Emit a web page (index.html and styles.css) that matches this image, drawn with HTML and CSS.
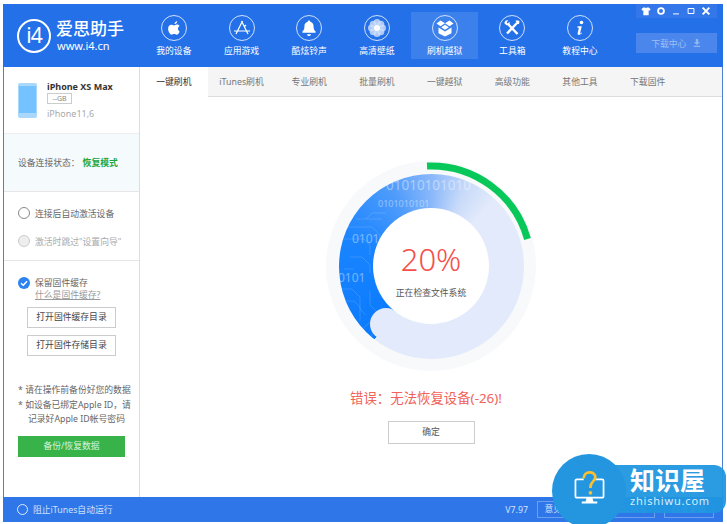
FILE: index.html
```html
<!DOCTYPE html>
<html lang="zh-CN">
<head>
  <meta charset="UTF-8">
  <title>爱思助手</title>
  <link rel="stylesheet" href="styles.css">
</head>
<body>
  <div class="window">
    <header class="topbar">
      <div class="logo">
        <div class="logo-mark">i4</div>
        <div class="logo-text">
          <div class="logo-name">爱思助手</div>
          <div class="logo-url">www.i4.cn</div>
        </div>
      </div>
      <nav class="nav">
        <div class="nav-item">
          <svg class="nav-icon" viewBox="0 0 26 26"><circle cx="13" cy="13" r="12.5" class="ring"/><path class="fill" d="M16.2 6.2c.1 1.100-.9 2.700-2.700 2.700-.1-1.300 1.200-2.600 2.700-2.700zM18.600 16.400c-.6 1.500-1.700 3.300-2.900 3.300-1 0-1.300-.6-2.500-.6s-1.500.6-2.500.6c-1.500 0-3.600-3.200-3.600-6 0-2.600 1.700-4 3.200-4 1.100 0 1.900.7 2.700.7s1.500-.8 2.900-.8c.9 0 2 .5 2.700 1.400-2.300 1.300-1.900 4.500 0 5.400z"/></svg>
          <span>我的设备</span>
        </div>
        <div class="nav-item">
          <svg class="nav-icon" viewBox="0 0 26 26"><circle cx="13" cy="13" r="12.500" class="ring"/><path class="line" d="M13.500 6 7 19M12.500 6 19 19M5 16h16M15 12l2-2"/></svg>
          <span>应用游戏</span>
        </div>
        <div class="nav-item">
          <svg class="nav-icon" viewBox="0 0 26 26"><circle cx="13" cy="13" r="12.500" class="ring"/><path class="fill" d="M13 5.500c.8 0 1.300.6 1.300 1.300 2.300.6 3.300 2.500 3.300 4.700 0 2.500.6 3.700 2 5v1.200H6.400v-1.200c1.400-1.300 2-2.500 2-5 0-2.200 1-4.100 3.300-4.700 0-.7.500-1.300 1.300-1.300zM11 19.200h4c0 1.100-.9 1.800-2 1.800s-2-.7-2-1.800z"/></svg>
          <span>酷炫铃声</span>
        </div>
        <div class="nav-item">
          <svg class="nav-icon" viewBox="0 0 26 26"><circle cx="13" cy="13" r="12.500" class="ring"/><g class="petals"><circle cx="13" cy="7.500" r="3.500"/><circle cx="13" cy="18.500" r="3.500"/><circle cx="7.500" cy="13" r="3.500"/><circle cx="18.500" cy="13" r="3.500"/><circle cx="9.200" cy="9.200" r="3.500"/><circle cx="16.800" cy="9.200" r="3.500"/><circle cx="9.200" cy="16.800" r="3.500"/><circle cx="16.800" cy="16.800" r="3.500"/></g><circle cx="13" cy="13" r="3" class="fill"/></svg>
          <span>高清壁纸</span>
        </div>
        <div class="nav-item nav-item-active">
          <svg class="nav-icon" viewBox="0 0 26 26"><circle cx="13" cy="13" r="12.500" class="ring"/><path class="fill" d="M8.500 5.500 13 8.300 8.500 11.200 4.500 8.500zM17.500 5.500 21.500 8.500 17.500 11.200 13 8.300zM13 9.800 16.800 12.300 13 14.800 9.200 12.300zM6.500 12.500l2 1.300L13 16.500l4.500-2.700 2-1.300v5.700L13 21.500l-6.500-3.300z"/></svg>
          <span>刷机越狱</span>
        </div>
        <div class="nav-item">
          <svg class="nav-icon" viewBox="0 0 26 26"><circle cx="13" cy="13" r="12.500" class="ring"/><path class="line-bold" d="M9 9l9.500 10"/><path class="line-bold" d="M18 8l-10 10.500"/><path class="fill" d="M5.500 8.500c-.3-2.200 1.800-3.900 3.800-3l-1.700 1.700 1.200 1.300 1.700-1.700c.8 2-.9 3.900-3 3.500zM16.500 5.500h3l1 1-.5 2.500h-2z"/></svg>
          <span>工具箱</span>
        </div>
        <div class="nav-item">
          <svg class="nav-icon" viewBox="0 0 26 26"><circle cx="13" cy="13" r="12.500" class="ring"/><circle cx="14.500" cy="7.500" r="1.800" class="fill"/><path class="fill" d="M10.500 11.300h4.300l-1.700 6.700c-.1.500.3.600.7.300l1-.8.300.5c-1.100 1.200-2 1.800-3.100 1.800-1.200 0-1.600-.7-1.300-1.900l1.100-4.700c.1-.5-.3-.6-1.300-.5z"/></svg>
          <span>教程中心</span>
        </div>
      </nav>
      <div class="top-right">
        <div class="win-controls">
          <svg viewBox="0 0 12 12"><path class="fill" d="M3.500 1.500 6 2.500l2.500-1 3 2-1.200 2.200-1.100-.5V11H2.800V5.200l-1.100.5L.5 3.500z"/></svg>
          <svg viewBox="0 0 12 12"><circle cx="6" cy="6" r="3.500" fill="none" stroke="#fff" stroke-width="2.200"/></svg>
          <svg viewBox="0 0 12 12"><path class="line" d="M2.500 9.500h7"/></svg>
          <svg viewBox="0 0 12 12"><path class="line" d="M2.500 3h7v6h-7z"/></svg>
          <svg viewBox="0 0 12 12"><path class="line-bold" d="M2 2l8 8M10 2l-8 8"/></svg>
        </div>
        <div class="download-btn">下载中心
          <svg viewBox="0 0 10 10"><path d="M3.500 0h3v4h2.500L5 7.500 1 4h2.500zM1 8.500h8V10H1z" fill="#8fb6f3"/></svg>
        </div>
      </div>
    </header>

    <div class="body-row">
      <aside class="sidebar">
        <section class="device">
          <div class="phone"><div class="phone-screen"></div></div>
          <div>
            <div class="device-name">iPhone XS Max</div>
            <div class="device-size">--GB</div>
            <div class="device-model">iPhone11,6</div>
          </div>
        </section>
        <section class="status">设备连接状态：<b>恢复模式</b></section>
        <section class="options">
          <div class="option"><i class="radio"></i>连接后自动激活设备</div>
          <div class="option option-off"><i class="radio radio-off"></i>激活时跳过"设置向导"</div>
        </section>
        <section class="cache">
          <div class="cache-check">
            <svg class="check" viewBox="0 0 12 12"><circle cx="6" cy="6" r="6" fill="#2b82f0"/><path d="M3 6.200 5.300 8.300 9 4.200" fill="none" stroke="#fff" stroke-width="1.500"/></svg>
            <div>
              <div>保留固件缓存</div>
              <div class="cache-link">什么是固件缓存?</div>
            </div>
          </div>
          <div class="side-btn">打开固件缓存目录</div>
          <div class="side-btn">打开固件存储目录</div>
        </section>
        <section class="notes">
          <p>* 请在操作前备份好您的数据</p>
          <p>* 如设备已绑定Apple ID，请<br><span class="indent">记录好Apple ID帐号密码</span></p>
          <div class="backup-btn">备份/恢复数据</div>
        </section>
      </aside>

      <main class="main">
        <div class="tabs">
          <div class="tab tab-active">一键刷机</div>
          <div class="tab">iTunes刷机</div>
          <div class="tab">专业刷机</div>
          <div class="tab">批量刷机</div>
          <div class="tab">一键越狱</div>
          <div class="tab">高级功能</div>
          <div class="tab">其他工具</div>
          <div class="tab">下载固件</div>
        </div>
        <div class="flash">
          <div class="dial">
            <div class="disc"></div>
            <svg class="dial-art" viewBox="0 0 210 210">
              <g class="circuit">
                <path d="M22 66h24l8 8v12M16 78h22l6 6v10M30 58h26M24 96h12l8 8v8M12 128h14l8 8v12l6 6M20 140h8l6 6v14M44 130v14l10 10M34 170l16-14 6-6M44 176l14-14M18 108h10M60 52h-14l-6 6"/>
              </g>
              <g class="binary">
                <text x="60" y="29" font-size="13.500">01010101010</text>
                <text x="52" y="46" font-size="9">0101010101</text>
                <text x="26" y="82" font-size="12">0101</text>
                <text x="12" y="121" font-size="12">0101</text>
                <text x="50" y="170" font-size="9">01</text>
              </g>
              <circle cx="60" cy="163" r="16" fill="#e2eafb"/>
              <path d="M101 5A100 100 0 0 1 201.500 78" fill="none" stroke="#08c85a" stroke-width="7"/>
            </svg>
            <div class="hole">
              <div class="percent">20%</div>
              <div class="hole-label">正在检查文件系统</div>
            </div>
          </div>
          <div class="error">错误：无法恢复设备(-26)!</div>
          <div class="ok-btn">确定</div>
        </div>
      </main>
    </div>

    <footer class="footer">
      <div class="footer-left"><i class="footer-radio"></i>阻止iTunes自动运行</div>
      <div class="footer-right">
        <span class="version">V7.97</span>
        <span class="foot-btn">意见反馈</span>
        <span class="foot-btn foot-btn-wide">微信公众号</span>
        <span class="foot-btn">检查更新</span>
      </div>
    </footer>
  </div>

  <!-- site watermark sits over the window corner -->
  <div class="watermark">
    <div class="wm-bar">
      <div class="wm-name">知识屋</div>
      <div class="wm-url">zhishiwu.com</div>
    </div>
    <div class="wm-circle">
      <svg viewBox="0 0 32 36" class="wm-icon">
        <path d="M10 9H3a1.500 1.500 0 0 0-1.500 1.500v16A1.500 1.500 0 0 0 3 28h26a1.500 1.500 0 0 0 1.500-1.500v-16A1.500 1.500 0 0 0 29 9h-7" fill="none" stroke="#fff" stroke-width="1.800"/>
        <path d="M13 28h6l1 4h4v2H8v-2h4z" fill="#fff"/>
        <path d="M10 8c0-8 12-8 12-1 0 4-5 4-5 10v1" fill="none" stroke="#fbc02d" stroke-width="2.800"/>
        <circle cx="17" cy="23" r="1.900" fill="#fbc02d"/>
      </svg>
    </div>
  </div>
</body>
</html>
```

FILE: styles.css
```css
/* General styling */
html, body {
  margin: 0;
  padding: 0;
  height: 524px;
  overflow: hidden;
  background: #fff;
}

body {
  font-family: "Noto Sans", "Noto Sans CJK SC", sans-serif;
  font-size: 8.800px;
  color: #666;
  position: relative;
}

.window {
  margin: 4px 4px 0 3px;
  height: 518px;
  display: flex;
  flex-direction: column;
  box-sizing: border-box;
  border-left: 1px solid #4a80d8;
  border-right: 1px solid #4a80d8;
}

.ring {
  fill: none;
  stroke: #cfe0fa;
  stroke-width: 1;
}

.fill {
  fill: #fff;
}

.line {
  fill: none;
  stroke: #fff;
  stroke-width: 1.200;
}

.line-bold {
  fill: none;
  stroke: #fff;
  stroke-width: 2.400;
}

.petals circle {
  fill: #cfe0fb;
  opacity: 0.8;
}

/* Top bar */
.topbar {
  height: 63px;
  flex: none;
  display: flex;
  background: #2470e8;
  color: #fff;
  margin-left: -1px;
  margin-right: -1px;
}

.logo {
  width: 137px;
  flex: none;
  display: flex;
  align-items: center;
  padding-left: 14px;
  box-sizing: border-box;
  gap: 5px;
}

.logo-mark {
  width: 30px;
  height: 30px;
  flex: none;
  border: 2px solid #fff;
  border-radius: 50%;
  text-align: center;
  font-size: 21px;
  line-height: 28px;
  font-weight: 400;
  letter-spacing: -1px;
}

.logo-name {
  font-size: 17px;
  line-height: 20px;
  font-weight: 500;
  white-space: nowrap;
}

.logo-url {
  font-size: 11px;
  line-height: 13px;
  padding-left: 1px;
}

.nav {
  display: flex;
  padding-top: 8px;
}

.nav-item {
  width: 67.700px;
  height: 47px;
  display: flex;
  flex-direction: column;
  align-items: center;
  line-height: 14px;
}

.nav-item-active {
  background: #3c80ec;
}

.nav-icon {
  width: 26px;
  height: 26px;
  margin: 3px 0 3px;
  flex: none;
}

.top-right {
  width: 81px;
  margin-left: 22px;
}

.win-controls {
  height: 14px;
  background: #3477ea;
  display: flex;
  justify-content: space-around;
  align-items: center;
  padding: 0 3px;
}

.win-controls svg {
  width: 10px;
  height: 10px;
}

.download-btn {
  margin-top: 15px;
  height: 20px;
  background: #4a86ec;
  color: #9dbff5;
  display: flex;
  align-items: center;
  justify-content: center;
  gap: 7px;
}

.download-btn svg {
  width: 8px;
  height: 8px;
}

/* Sidebar */
.body-row {
  flex: 1;
  display: flex;
  min-height: 0;
}

.sidebar {
  width: 136px;
  flex: none;
  box-sizing: border-box;
  border-right: 1px solid #ddd;
  display: flex;
  flex-direction: column;
}

.device {
  height: 66px;
  flex: none;
  box-sizing: border-box;
  display: flex;
  align-items: center;
  gap: 10px;
  padding: 0 0 0 14px;
}

.phone {
  width: 19px;
  height: 35px;
  box-sizing: border-box;
  background: #a9d8fb;
  border-radius: 2px;
  padding: 3px 1px 5px;
  flex: none;
}

.phone-screen {
  height: 100%;
  background: #74c2ff;
}

.device-name {
  color: #333;
  font-weight: 700;
  font-size: 9px;
  line-height: 13px;
}

.device-size {
  width: 23px;
  height: 9px;
  border: 1px solid #ccc;
  font-size: 7px;
  line-height: 9px;
  text-align: center;
  color: #888;
  margin-bottom: 3px;
}

.device-model {
  color: #aaa;
  font-size: 9px;
  line-height: 13px;
}

.status {
  height: 59px;
  flex: none;
  box-sizing: border-box;
  display: flex;
  align-items: center;
  padding-left: 14px;
  background: #f5fbfd;
  border-top: 1px solid #eee;
  border-bottom: 1px solid #e6e6e6;
}

.status b {
  color: #22a53a;
  margin-left: 3px;
}

.options {
  height: 69px;
  flex: none;
  box-sizing: border-box;
  border-bottom: 1px solid #e6e6e6;
  padding: 13px 0 0 14px;
}

.option {
  display: flex;
  align-items: center;
  gap: 5px;
  height: 16px;
  margin-bottom: 12px;
  white-space: nowrap;
}

.option-off {
  color: #aaa;
}

.radio {
  width: 10px;
  height: 10px;
  border: 1px solid #888;
  border-radius: 50%;
  flex: none;
}

.radio-off {
  border-color: #ccc;
  background: #eee;
}

.cache {
  height: 105px;
  flex: none;
  box-sizing: border-box;
  padding: 16px 0 0 14px;
}

.cache-check {
  display: flex;
  gap: 5px;
  line-height: 12px;
}

.check {
  width: 12px;
  height: 12px;
  flex: none;
}

.cache-link {
  color: #999;
  text-decoration: underline;
}

.side-btn {
  width: 89px;
  height: 21px;
  box-sizing: border-box;
  margin: 7px 0 0 9px;
  border: 1px solid #ccc;
  background: #fff;
  color: #444;
  text-align: center;
  line-height: 19px;
}

.cache-check + .side-btn {
  margin-top: 6px;
}

.notes {
  padding: 17px 0 0 14px;
  line-height: 14.500px;
  white-space: nowrap;
}

.notes p {
  margin: 0;
}

.indent {
  padding-left: 10px;
}

.backup-btn {
  width: 107px;
  height: 21px;
  margin: 9px 0 0 0;
  background: #37b34a;
  color: #d8f3dc;
  text-align: center;
  line-height: 21px;
}

/* Main column */
.main {
  flex: 1;
  min-width: 0;
  display: flex;
  flex-direction: column;
}

.tabs {
  height: 30px;
  flex: none;
  box-sizing: border-box;
  display: flex;
  background: #f5f5f5;
  border-bottom: 1px solid #ddd;
}

.tab {
  width: 67.700px;
  text-align: center;
  line-height: 30px;
  color: #777;
}

.tab-active {
  background: #fff;
  color: #333;
  height: 30px;
}

.flash {
  flex: 1;
  display: flex;
  flex-direction: column;
  align-items: center;
  padding-top: 64px;
}

.dial {
  width: 210px;
  height: 210px;
  border-radius: 50%;
  background: #f8f9fa;
  display: grid;
  place-items: center;
}

.disc, .dial-art, .hole {
  grid-area: 1 / 1;
}

.disc {
  width: 185px;
  height: 185px;
  border-radius: 50%;
  background: conic-gradient(from 218deg, #0a7bfd 0deg, #1a84ff 70deg, #4f9cfb 115deg, #8ab8fa 142deg, #c8daf9 165deg, #e2eafb 185deg, #e2eafb 360deg);
}

.dial-art {
  width: 210px;
  height: 210px;
}

.binary text {
  fill: #fff;
  opacity: 0.4;
  font-family: "Noto Sans", sans-serif;
}

.circuit path {
  fill: none;
  stroke: #fff;
  stroke-width: 0.700;
  opacity: 0.2;
}

.hole {
  width: 116px;
  height: 116px;
  border-radius: 50%;
  background: #fff;
  display: flex;
  flex-direction: column;
  align-items: center;
}

.percent {
  margin-top: 31px;
  font-size: 31px;
  line-height: 40px;
  font-weight: 300;
  color: #f4504a;
}

.hole-label {
  margin-top: 7px;
  line-height: 14px;
  color: #555;
}

.error {
  margin-top: 17px;
  font-size: 13.400px;
  line-height: 20px;
  color: #f0625a;
  margin-right: 10px;
}

.ok-btn {
  width: 87px;
  height: 23px;
  box-sizing: border-box;
  margin-top: 13px;
  border: 1px solid #ccc;
  text-align: center;
  line-height: 21px;
  color: #555;
}

/* Footer */
.footer {
  height: 25px;
  flex: none;
  display: flex;
  justify-content: space-between;
  align-items: center;
  background: #2f77e8;
  color: #cfe0fb;
  margin-left: -1px;
  margin-right: -1px;
  padding: 0 9px 0 14px;
}

.footer-left {
  display: flex;
  align-items: center;
  gap: 5px;
}

.footer-radio {
  width: 9px;
  height: 9px;
  border: 1px solid #dfe9fb;
  border-radius: 50%;
}

.footer-right {
  display: flex;
  align-items: center;
  gap: 9px;
}

.foot-btn {
  width: 50px;
  height: 17px;
  box-sizing: border-box;
  border: 1px solid #6b9ff0;
  text-align: center;
  line-height: 15px;
}

.foot-btn-wide {
  width: 59px;
}

/* Watermark */
.watermark {
  position: absolute;
  left: 552px;
  top: 454px;
  width: 174px;
  height: 70px;
}

.wm-bar {
  position: absolute;
  left: 40px;
  top: 11px;
  width: 134px;
  height: 48px;
  box-sizing: border-box;
  padding-left: 38px;
  border-radius: 0 12px 12px 0;
  background: rgba(32, 150, 224, 0.95);
  color: #fff;
}

.wm-name {
  font-size: 25px;
  line-height: 30px;
  font-weight: 700;
  white-space: nowrap;
}

.wm-url {
  font-size: 11px;
  line-height: 12px;
  letter-spacing: 0.800px;
  white-space: nowrap;
  color: #d5ecfa;
}

.wm-circle {
  position: absolute;
  left: 0;
  top: 0;
  width: 74px;
  height: 74px;
  border-radius: 50%;
  background: #2496e0;
  display: flex;
  align-items: center;
  justify-content: center;
}

.wm-icon {
  width: 31px;
  height: 36px;
  margin: 0 0 6px 0;
}
```
